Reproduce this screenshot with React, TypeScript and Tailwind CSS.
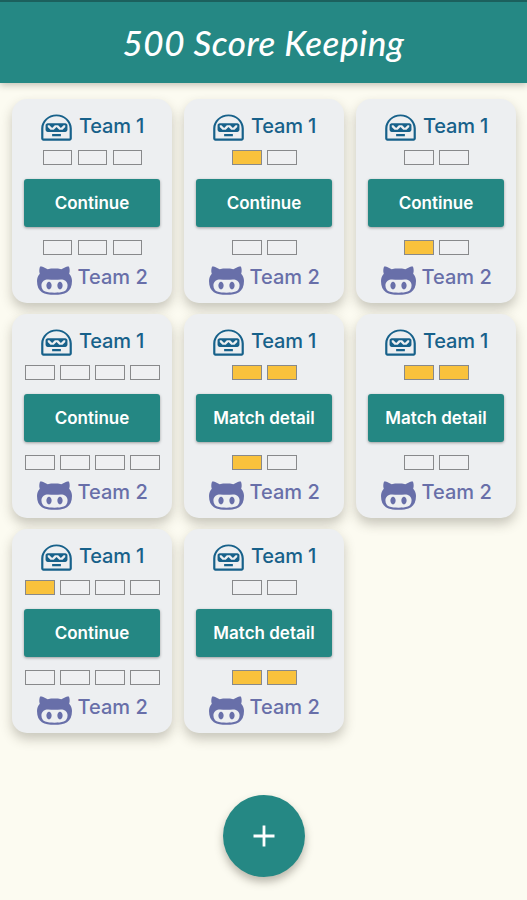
import React from "react";

type Match = {
  team1: boolean[];
  team2: boolean[];
  finished?: boolean;
};

const matches: Match[] = [
  { team1: [false, false, false], team2: [false, false, false] },
  { team1: [true, false], team2: [false, false] },
  { team1: [false, false], team2: [true, false] },
  { team1: [false, false, false, false], team2: [false, false, false, false] },
  { team1: [true, true], team2: [true, false], finished: true },
  { team1: [true, true], team2: [false, false], finished: true },
  { team1: [true, false, false, false], team2: [false, false, false, false] },
  { team1: [false, false], team2: [true, true], finished: true },
];

function RobotIcon() {
  return (
    <svg viewBox="0 0 14 16" className="h-[35px] w-[31px] shrink-0" fill="currentColor">
      <path
        fillRule="evenodd"
        d="M3 6c-.55 0-1 .45-1 1v2c0 .55.45 1 1 1h8c.55 0 1-.45 1-1V7c0-.55-.45-1-1-1H3zm8 1.75L9.75 9h-1.5L7 7.75 5.75 9h-1.5L3 7.75V7h.75L5 8.25 6.25 7h1.5L9 8.25 10.25 7H11v.75zM5 11h4v1H5v-1zm2-9C3.14 2 0 4.91 0 8.5V13c0 .55.45 1 1 1h12c.55 0 1-.45 1-1V8.5C14 4.91 10.86 2 7 2zm6 11H1V8.5c0-3.09 2.64-5.59 6-5.59s6 2.5 6 5.59V13z"
      />
    </svg>
  );
}

function CatIcon() {
  return (
    <svg viewBox="0 0 16 16" className="size-[35px] shrink-0" fill="currentColor">
      <path
        fillRule="evenodd"
        d="M14.7 5.34c.13-.32.55-1.59-.13-3.31 0 0-1.05-.33-3.44 1.3-1-.28-2.07-.32-3.13-.32s-2.13.04-3.13.32c-2.39-1.64-3.44-1.3-3.44-1.3-.68 1.72-.26 2.99-.13 3.31C.49 6.21 0 7.33 0 8.69 0 13.84 3.33 15 7.98 15S16 13.84 16 8.69c0-1.36-.49-2.48-1.3-3.35zM8 14.02c-3.3 0-5.98-.15-5.98-3.35 0-.76.38-1.48 1.02-2.07 1.07-.98 2.9-.46 4.96-.46 2.07 0 3.88-.52 4.96.46.65.59 1.02 1.3 1.02 2.07 0 3.19-2.68 3.35-5.98 3.35zM5.49 9.01c-.66 0-1.2.8-1.2 1.78s.54 1.79 1.2 1.79c.66 0 1.2-.8 1.2-1.79s-.54-1.78-1.2-1.78zm5.02 0c-.66 0-1.2.79-1.2 1.78s.54 1.79 1.2 1.79c.66 0 1.2-.8 1.2-1.79s-.53-1.78-1.2-1.78z"
      />
    </svg>
  );
}

function Rounds({ rounds }: { rounds: boolean[] }) {
  return (
    <div className="flex h-[15px] justify-center gap-[5.5px] pl-px">
      {rounds.map((won, index) => (
        <div
          key={index}
          className={`w-[29.6px] border border-[#88898b] ${won ? "bg-[#f9c23c]" : "bg-[#eff0f2]"}`}
        />
      ))}
    </div>
  );
}

function MatchCard({ match }: { match: Match }) {
  return (
    <div className="flex h-[204px] flex-col rounded-[15px] bg-[#edeff1] px-3 pt-[11px] shadow-[0_6px_12px_rgba(60,55,40,0.27)]">
      <div className="flex h-[35px] justify-center gap-[7px] text-[#17618a]">
        <RobotIcon />
        <span className="w-[64px] whitespace-nowrap text-[20px] leading-[33px] font-medium tracking-[-0.2px]">
          Team 1
        </span>
      </div>
      <div className="mt-[5px]">
        <Rounds rounds={match.team1} />
      </div>
      <button className="mt-[14px] h-[48px] rounded-[3px] bg-[#248783] pt-px text-[17px] font-semibold text-white shadow-[0_1px_3px_rgba(0,0,0,0.35)]">
        {match.finished ? "Match detail" : "Continue"}
      </button>
      <div className="mt-[13px]">
        <Rounds rounds={match.team2} />
      </div>
      <div className="mt-[7px] flex h-[35px] justify-center gap-[6px] text-[#686fa9]">
        <CatIcon />
        <span className="w-[70px] whitespace-nowrap text-[20px] leading-[31px] font-medium">
          Team 2
        </span>
      </div>
    </div>
  );
}

export default function App() {
  return (
    <div className="flex h-[900px] w-[527px] flex-col overflow-hidden bg-[#fcfbf1] font-['Inter',sans-serif]">
      <header className="flex h-[83px] shrink-0 items-center justify-center border-t-2 border-[#1c605d] bg-[#258884] shadow-[0_2px_7px_rgba(60,55,40,0.3)]">
        <h1 className="pb-[2px] whitespace-nowrap font-['Lato',sans-serif] text-[35px] leading-[40px] font-medium tracking-[0.5px] text-white italic">
          500 Score Keeping
        </h1>
      </header>
      <main className="mt-4 ml-3 grid w-[505px] grid-cols-[160px_160px_160px] gap-x-[12px] gap-y-[11px]">
        {matches.map((match, index) => (
          <MatchCard key={index} match={match} />
        ))}
      </main>
      <button className="mt-[62px] ml-[223px] flex size-[82px] shrink-0 items-center justify-center rounded-full bg-[#258884] text-white shadow-[0_5px_9px_rgba(60,55,40,0.35)]">
        <svg viewBox="0 0 22 22" className="size-[22px]" fill="none" stroke="currentColor" strokeWidth="2.8">
          <path d="M11 .5v21M.5 11h21" />
        </svg>
      </button>
    </div>
  );
}
